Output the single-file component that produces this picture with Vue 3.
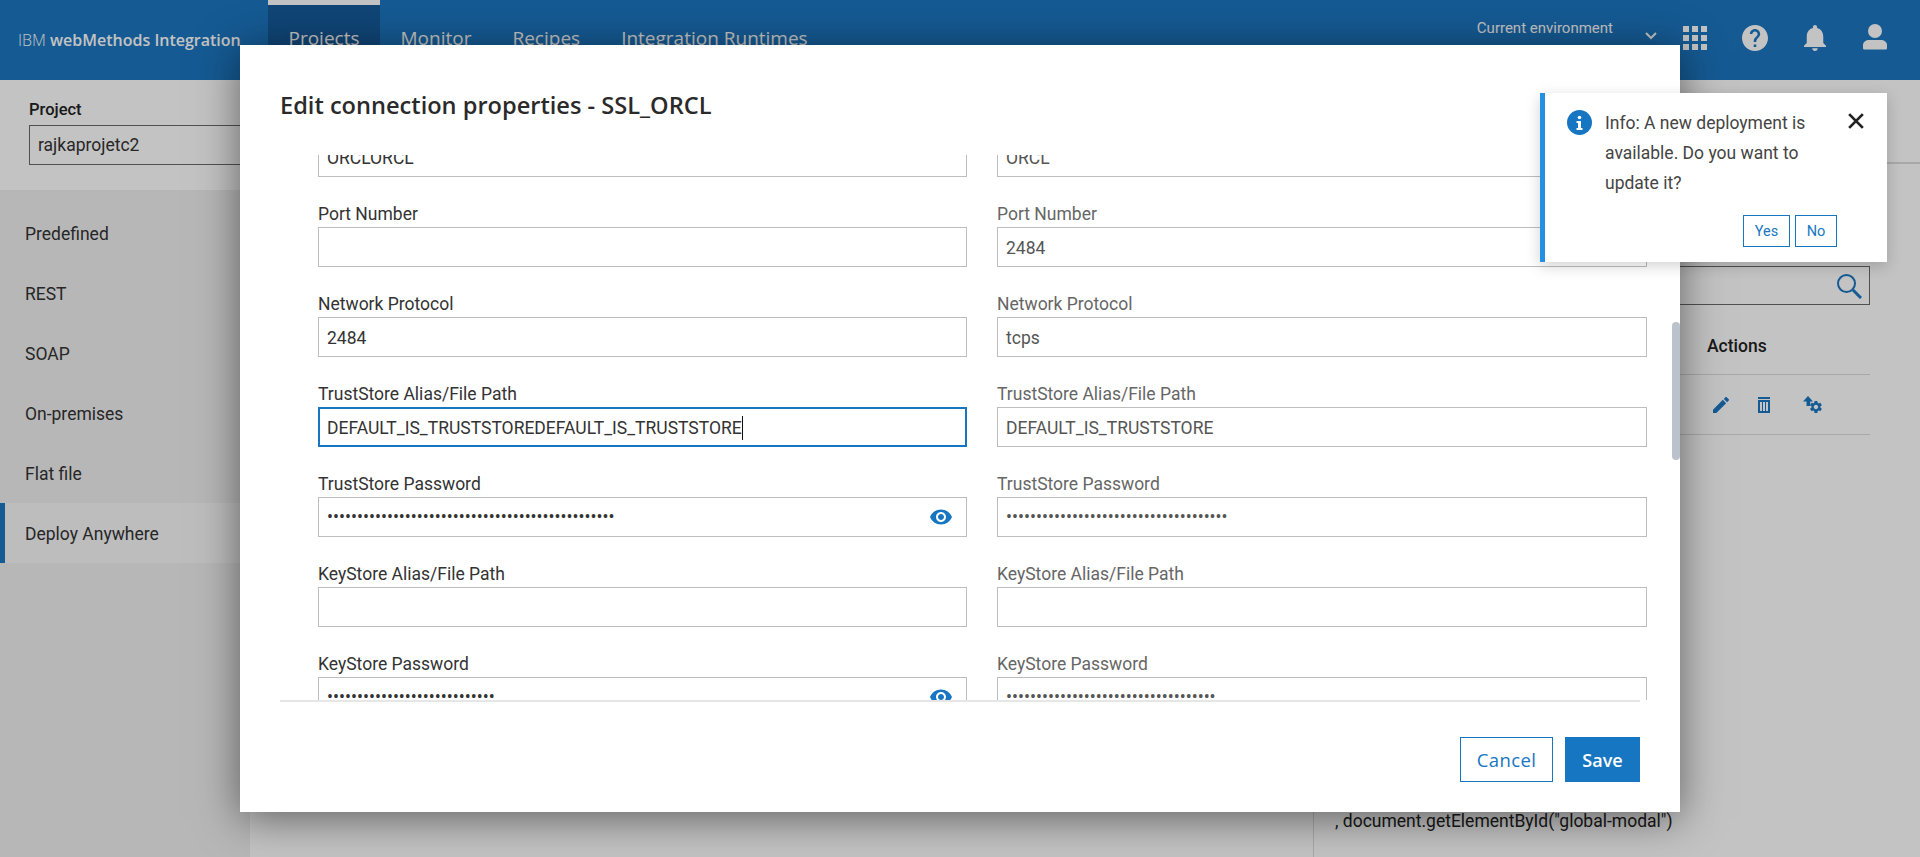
<script setup>
const navItems = ['Projects', 'Monitor', 'Recipes', 'Integration Runtimes']
const sideItems = ['Predefined', 'REST', 'SOAP', 'On-premises', 'Flat file', 'Deploy Anywhere']
const dots = (n) => '•'.repeat(n)
const rows = [
  { left: { label: '', value: 'ORCLORCL' }, right: { label: '', value: 'ORCL' } },
  { left: { label: 'Port Number', value: '' }, right: { label: 'Port Number', value: '2484' } },
  { left: { label: 'Network Protocol', value: '2484' }, right: { label: 'Network Protocol', value: 'tcps' } },
  { left: { label: 'TrustStore Alias/File Path', value: 'DEFAULT_IS_TRUSTSTOREDEFAULT_IS_TRUSTSTORE', focused: true }, right: { label: 'TrustStore Alias/File Path', value: 'DEFAULT_IS_TRUSTSTORE' } },
  { left: { label: 'TrustStore Password', value: dots(48), secret: true, eye: true }, right: { label: 'TrustStore Password', value: dots(37), secret: true } },
  { left: { label: 'KeyStore Alias/File Path', value: '' }, right: { label: 'KeyStore Alias/File Path', value: '' } },
  { left: { label: 'KeyStore Password', value: dots(28), secret: true, eye: true }, right: { label: 'KeyStore Password', value: dots(35), secret: true } },
]
const eyePath = 'M12 4.5C7 4.5 2.73 7.61 1 12c1.73 4.39 6 7.5 11 7.5s9.27-3.11 11-7.5c-1.73-4.39-6-7.5-11-7.5zM12 17c-2.76 0-5-2.24-5-5s2.24-5 5-5 5 2.24 5 5-2.24 5-5 5zm0-8c-1.66 0-3 1.34-3 3s1.34 3 3 3 3-1.34 3-3-1.34-3-3-3z'
</script>

<template>
  <div class="page">
    <header class="topbar">
      <div class="brand">IBM <b>webMethods Integration</b></div>
      <nav class="nav">
        <a v-for="(item, i) in navItems" :key="item" class="nav-item" :class="{ active: i === 0 }">{{ item }}</a>
      </nav>
      <div class="top-right">
        <div class="env">Current environment</div>
        <svg class="chev" viewBox="0 0 12 8" width="12" height="8"><path d="M1 1l5 5 5-5" fill="none" stroke="#fff" stroke-width="2"/></svg>
        <svg class="grid-icon" viewBox="0 0 24 24" width="24" height="24" fill="#fff">
          <rect x="0" y="0" width="6" height="6"/><rect x="9" y="0" width="6" height="6"/><rect x="18" y="0" width="6" height="6"/>
          <rect x="0" y="9" width="6" height="6"/><rect x="9" y="9" width="6" height="6"/><rect x="18" y="9" width="6" height="6"/>
          <rect x="0" y="18" width="6" height="6"/><rect x="9" y="18" width="6" height="6"/><rect x="18" y="18" width="6" height="6"/>
        </svg>
        <svg class="help-icon" viewBox="2 2 20 20" width="26" height="26" fill="#fff"><path d="M12 2C6.48 2 2 6.48 2 12s4.48 10 10 10 10-4.48 10-10S17.52 2 12 2zm1 17h-2v-2h2v2zm2.07-7.75l-.9.92C13.45 12.9 13 13.5 13 15h-2v-.5c0-1.1.45-2.1 1.17-2.83l1.24-1.26c.37-.36.59-.86.59-1.41 0-1.1-.9-2-2-2s-2 .9-2 2H8c0-2.21 1.79-4 4-4s4 1.79 4 4c0 .88-.36 1.68-.93 2.25z" fill-rule="evenodd"/></svg>
        <svg class="bell-icon" viewBox="4 2.5 16 19.5" width="22" height="26" fill="#fff" preserveAspectRatio="none"><path d="M12 22c1.1 0 2-.9 2-2h-4c0 1.1.9 2 2 2zm6-6v-5c0-3.07-1.63-5.64-4.5-6.32V4c0-.83-.67-1.5-1.5-1.5s-1.5.67-1.5 1.5v.68C7.64 5.36 6 7.92 6 11v5l-2 2v1h16v-1l-2-2z"/></svg>
        <svg class="user-icon" viewBox="0 0 24 26" width="24" height="26" fill="#fff"><circle cx="12" cy="7" r="7"/><path d="M0 24v-3c0-3 3-5 6-5h12c3 0 6 2 6 5v3c0 1-.6 1.600-1.600 1.600H1.600C.6 25.600 0 25 0 24z"/></svg>
      </div>
    </header>

    <section class="project-bar">
      <div class="project-field">
        <label class="project-label">Project</label>
        <div class="project-input">rajkaprojetc2</div>
      </div>
      <div class="project-strip"></div>
    </section>

    <div class="content">
      <aside class="sidebar">
        <div v-for="(item, i) in sideItems" :key="item" class="side-item" :class="{ selected: i === 5 }">{{ item }}</div>
      </aside>
      <main class="main">
        <div class="panel">
          <div class="search">
            <svg viewBox="0 0 26 26" width="26" height="26" fill="none" stroke="#1b76c2"><circle cx="10.500" cy="10.500" r="8.500" stroke-width="2"/><path d="M17 17l8 8" stroke-width="3"/></svg>
          </div>
          <div class="table-head"><span class="actions-title">Actions</span></div>
          <div class="table-row">
            <div class="action-icons">
              <svg viewBox="3 3 18 18" width="16" height="16" fill="#1b76c2"><path d="M3 17.250V21h3.750L17.810 9.940l-3.750-3.750L3 17.250zM20.710 7.040c.39-.39.39-1.020 0-1.410l-2.340-2.340c-.39-.39-1.020-.39-1.410 0l-1.830 1.830 3.750 3.750 1.830-1.830z"/></svg>
              <svg class="trash" viewBox="0 0 12 16" width="12" height="16" fill="none" stroke="#1b76c2"><path d="M0 1h12" stroke-width="2"/><path d="M1 4h10v11H1z" stroke-width="2"/><path d="M4.500 5v9M7.500 5v9" stroke-width="1"/></svg>
              <svg class="gear" viewBox="0 0 20 18" width="20" height="18" fill="#1b76c2"><path d="M5 0l5 5.500H7.200V10H3.500V5.500H0z"/><path transform="translate(5.500 3.500) scale(.62)" d="M19.140 12.940c.04-.3.060-.61.060-.94 0-.32-.02-.64-.07-.94l2.030-1.580c.18-.14.23-.41.120-.61l-1.920-3.320c-.12-.22-.37-.29-.59-.22l-2.390.96c-.5-.38-1.030-.7-1.620-.94l-.36-2.540c-.04-.24-.24-.41-.48-.41h-3.840c-.24 0-.43.170-.47.410l-.36 2.540c-.59.240-1.130.57-1.620.94l-2.390-.96c-.22-.08-.47 0-.59.220L2.740 8.870c-.12.210-.08.470.12.610l2.030 1.580c-.05.3-.09.630-.09.940s.02.640.07.940l-2.030 1.580c-.18.140-.23.410-.12.610l1.920 3.320c.12.220.37.290.59.220l2.390-.96c.5.380 1.030.7 1.620.94l.36 2.540c.05.240.24.410.48.410h3.840c.24 0 .44-.17.47-.41l.36-2.540c.59-.24 1.130-.56 1.620-.94l2.390.96c.22.080.47 0 .59-.22l1.920-3.320c.12-.22.070-.47-.12-.61l-2.010-1.580zM12 15.600c-1.980 0-3.600-1.620-3.600-3.600s1.620-3.600 3.600-3.600 3.600 1.620 3.600 3.600-1.620 3.600-3.600 3.600z"/></svg>
            </div>
          </div>
          <div class="code-line">, document.getElementById("global-modal")</div>
        </div>
      </main>
    </div>

    <div class="backdrop"></div>

    <div class="modal">
      <h2 class="modal-title">Edit connection properties - SSL_ORCL</h2>
      <div class="modal-body">
        <div class="form">
          <template v-for="(row, r) in rows" :key="r">
            <div v-for="(field, side) in [row.left, row.right]" :key="side" class="field" :class="{ ro: side === 1 }">
              <div v-if="field.label" class="field-label">{{ field.label }}</div>
              <div class="field-input" :class="{ focused: field.focused, secret: field.secret }">
                <span class="field-value" :class="{ caret: field.focused }">{{ field.value }}</span>
                <svg v-if="field.eye" class="eye" viewBox="0 0 24 24" width="24" height="24" fill="#1776c2"><path :d="eyePath"/></svg>
              </div>
            </div>
          </template>
        </div>
        <div class="scroll-thumb"></div>
      </div>
      <footer class="modal-foot">
        <button class="btn btn-ghost">Cancel</button>
        <button class="btn btn-solid">Save</button>
      </footer>
    </div>

    <div class="toast">
      <svg class="toast-icon" viewBox="0 0 25 25" width="25" height="25"><circle cx="12.500" cy="12.500" r="12.500" fill="#1776c2"/><circle cx="12.500" cy="7.500" r="1.800" fill="#fff"/><path d="M9.500 11h4.500v7h1.500v2h-6v-2H11v-5H9.500z" fill="#fff"/></svg>
      <div class="toast-main">
        <p class="toast-text">Info: A new deployment is available. Do you want to update it?</p>
        <div class="toast-actions">
          <button class="mini-btn yes">Yes</button>
          <button class="mini-btn no">No</button>
        </div>
      </div>
      <svg class="toast-close" viewBox="0 0 14 14" width="16" height="16"><path d="M1 1l12 12M13 1L1 13" stroke="#222" stroke-width="2.400" fill="none"/></svg>
    </div>
  </div>
</template>

<style scoped>
.page {
  position: relative;
  height: 857px;
  overflow: hidden;
  background: #fff;
  color: #333;
  font-family: Roboto, "Liberation Sans", sans-serif;
  display: flex;
  flex-direction: column;
}
.topbar {
  height: 80px;
  flex: none;
  background: #1c76c1;
  color: #fff;
  display: flex;
  align-items: stretch;
}
.brand {
  width: 268px;
  box-sizing: border-box;
  padding: 30px 0 0 18px;
  font-family: "Open Sans", sans-serif;
  font-size: 16px;
  line-height: 21px;
  white-space: nowrap;
  font-weight: 300;
}
.brand b { font-weight: 600; }
.nav { display: flex; }
.nav-item {
  padding: 21px 20.500px 0;
  font-family: "Open Sans", sans-serif;
  font-size: 19px;
  line-height: 25px;
  border-top: 5px solid transparent;
  white-space: nowrap;
}
.nav-item.active { background: #165b9b; border-top-color: #fff; }
.top-right { margin-left: auto; display: flex; align-items: flex-start; padding-right: 33px; }
.env { font-size: 15px; line-height: 20px; margin-top: 18px; white-space: nowrap; }
.chev { margin: 32px 26px 0 32px; }
.grid-icon { margin-top: 26px; }
.help-icon { margin: 25px 0 0 35px; }
.bell-icon { margin: 25px 0 0 36px; }
.user-icon { margin: 24px 0 0 37px; }

.project-bar { height: 110px; flex: none; display: flex; }
.project-field { width: 460px; padding: 20px 0 0 29px; box-sizing: border-box; }
.project-label { display: block; font-size: 16.500px; font-weight: 500; line-height: 20px; margin-bottom: 5px; color: #222; }
.project-input {
  height: 40px;
  box-sizing: border-box;
  border: 1px solid #6b6b6b;
  padding: 0 8px;
  font-size: 17.500px;
  line-height: 38px;
}
.project-strip { flex: 1; height: 84px; border-bottom: 2px solid #dcdcdc; box-sizing: border-box; }

.content { flex: 1; display: flex; min-height: 0; }
.sidebar { width: 250px; flex: none; background: #f0f0f0; padding-top: 13px; box-sizing: border-box; }
.side-item {
  height: 60px;
  padding-left: 25px;
  font-size: 17.500px;
  line-height: 62px;
  color: #333;
  box-sizing: border-box;
}
.side-item.selected { background: #f7f7f7; border-left: 5px solid #1c76c1; padding-left: 20px; }
.main { flex: 1; display: flex; justify-content: flex-end; }
.panel {
  width: 607px;
  box-sizing: border-box;
  border-left: 1px solid #dcdcdc;
  padding: 76px 50px 25px 21px;
  display: flex;
  flex-direction: column;
}
.search {
  height: 39px;
  box-sizing: border-box;
  border: 1px solid #6b6b6b;
  display: flex;
  justify-content: flex-end;
  align-items: center;
  padding-right: 7px;
}
.table-head { height: 70px; padding-top: 12px; display: flex; justify-content: flex-end; align-items: center; border-bottom: 1px solid #dcdcdc; box-sizing: border-box; }
.actions-title { width: 163px; font-size: 17.500px; font-weight: 500; color: #222; }
.table-row { height: 60px; box-sizing: border-box; border-bottom: 1px solid #dcdcdc; display: flex; justify-content: flex-end; align-items: center; }
.action-icons { width: 163px; padding-left: 6px; box-sizing: border-box; display: flex; align-items: center; }
.trash { margin-left: 29px; }
.gear { margin-left: 33px; }
.code-line { margin-top: auto; font-size: 17.500px; line-height: 22px; white-space: nowrap; color: #222; }

.backdrop { position: absolute; inset: 0; background: rgba(0, 0, 0, .235); }

.modal {
  position: absolute;
  left: 240px;
  top: 45px;
  width: 1440px;
  height: 767px;
  background: #fff;
  box-shadow: 0 6px 40px rgba(0, 0, 0, .5);
  display: flex;
  flex-direction: column;
}
.modal-title {
  margin: 0;
  height: 110px;
  flex: none;
  box-sizing: border-box;
  padding: 43px 40px 0;
  font-family: "Open Sans", sans-serif;
  font-size: 23.600px;
  line-height: 34px;
  font-weight: 600;
  color: #2a2a2a;
}
.modal-body {
  position: relative;
  height: 545px;
  flex: none;
  overflow: hidden;
}
.form {
  margin: -18px 0 0 78px;
  width: 1329px;
  display: grid;
  grid-template-columns: 649px 650px;
  column-gap: 30px;
  row-gap: 25px;
}
.field-label { font-size: 17.500px; line-height: 24px; margin-bottom: 1px; color: #333; white-space: nowrap; }
.ro .field-label { color: #666; }
.field-input {
  height: 40px;
  box-sizing: border-box;
  border: 1px solid #bdbdbd;
  padding: 0 8px;
  display: flex;
  align-items: center;
  justify-content: space-between;
  font-size: 17.500px;
  color: #333;
  white-space: nowrap;
}
.ro .field-input { color: #555; }
.field-input.focused { border: 2px solid #1776c2; padding: 0 7px; }
.field-value { line-height: 24px; position: relative; top: 1px; }
.field-value.caret { border-right: 1px solid #111; }
.secret .field-value { font-size: 17.750px; top: 0; }
.eye { margin-right: 5px; }
.scroll-thumb {
  position: absolute;
  right: 0;
  top: 167px;
  width: 8px;
  height: 138px;
  border-radius: 4px;
  background: #bac3cc;
}
.modal-foot {
  position: relative;
  flex: 1;
  margin: 0 40px;
  border-top: 2px solid #e6e6e6;
  display: flex;
  justify-content: flex-end;
  align-items: flex-start;
  gap: 12px;
  padding-top: 35px;
}
.btn {
  height: 45px;
  box-sizing: border-box;
  font-family: "Open Sans", sans-serif;
  font-size: 18px;
  cursor: pointer;
}
.btn-ghost { width: 93px; background: #fff; border: 1px solid #1776c2; color: #1776c2; font-size: 18.500px; letter-spacing: .4px; }
.btn-solid { width: 75px; background: #1776c2; border: 1px solid #1776c2; color: #fff; font-weight: 600; }

.toast {
  position: absolute;
  left: 1540px;
  top: 93px;
  width: 347px;
  height: 169px;
  box-sizing: border-box;
  background: #fff;
  border-left: 5px solid #2490e3;
  box-shadow: 0 4px 14px rgba(0, 0, 0, .18);
  padding: 17px 0 0 22px;
  display: flex;
  align-items: flex-start;
}
.toast-icon { flex: none; margin-right: 13px; }
.toast-main { width: 232px; }
.toast-text { margin: -2px 0 0; font-size: 17.500px; line-height: 30px; color: #444; font-weight: 400; width: 220px; }
.toast-actions { display: flex; justify-content: flex-end; gap: 5px; margin-top: 17px; }
.mini-btn {
  height: 32px;
  box-sizing: border-box;
  background: #fff;
  border: 1px solid #1776c2;
  color: #1776c2;
  font-family: Roboto, sans-serif;
  font-size: 14.500px;
  padding: 0;
}
.yes { width: 47px; }
.no { width: 42px; }
.toast-close { flex: none; margin: 3px 0 0 11px; }
</style>

<style>
html, body { margin: 0; padding: 0; overflow: hidden; }
</style>
